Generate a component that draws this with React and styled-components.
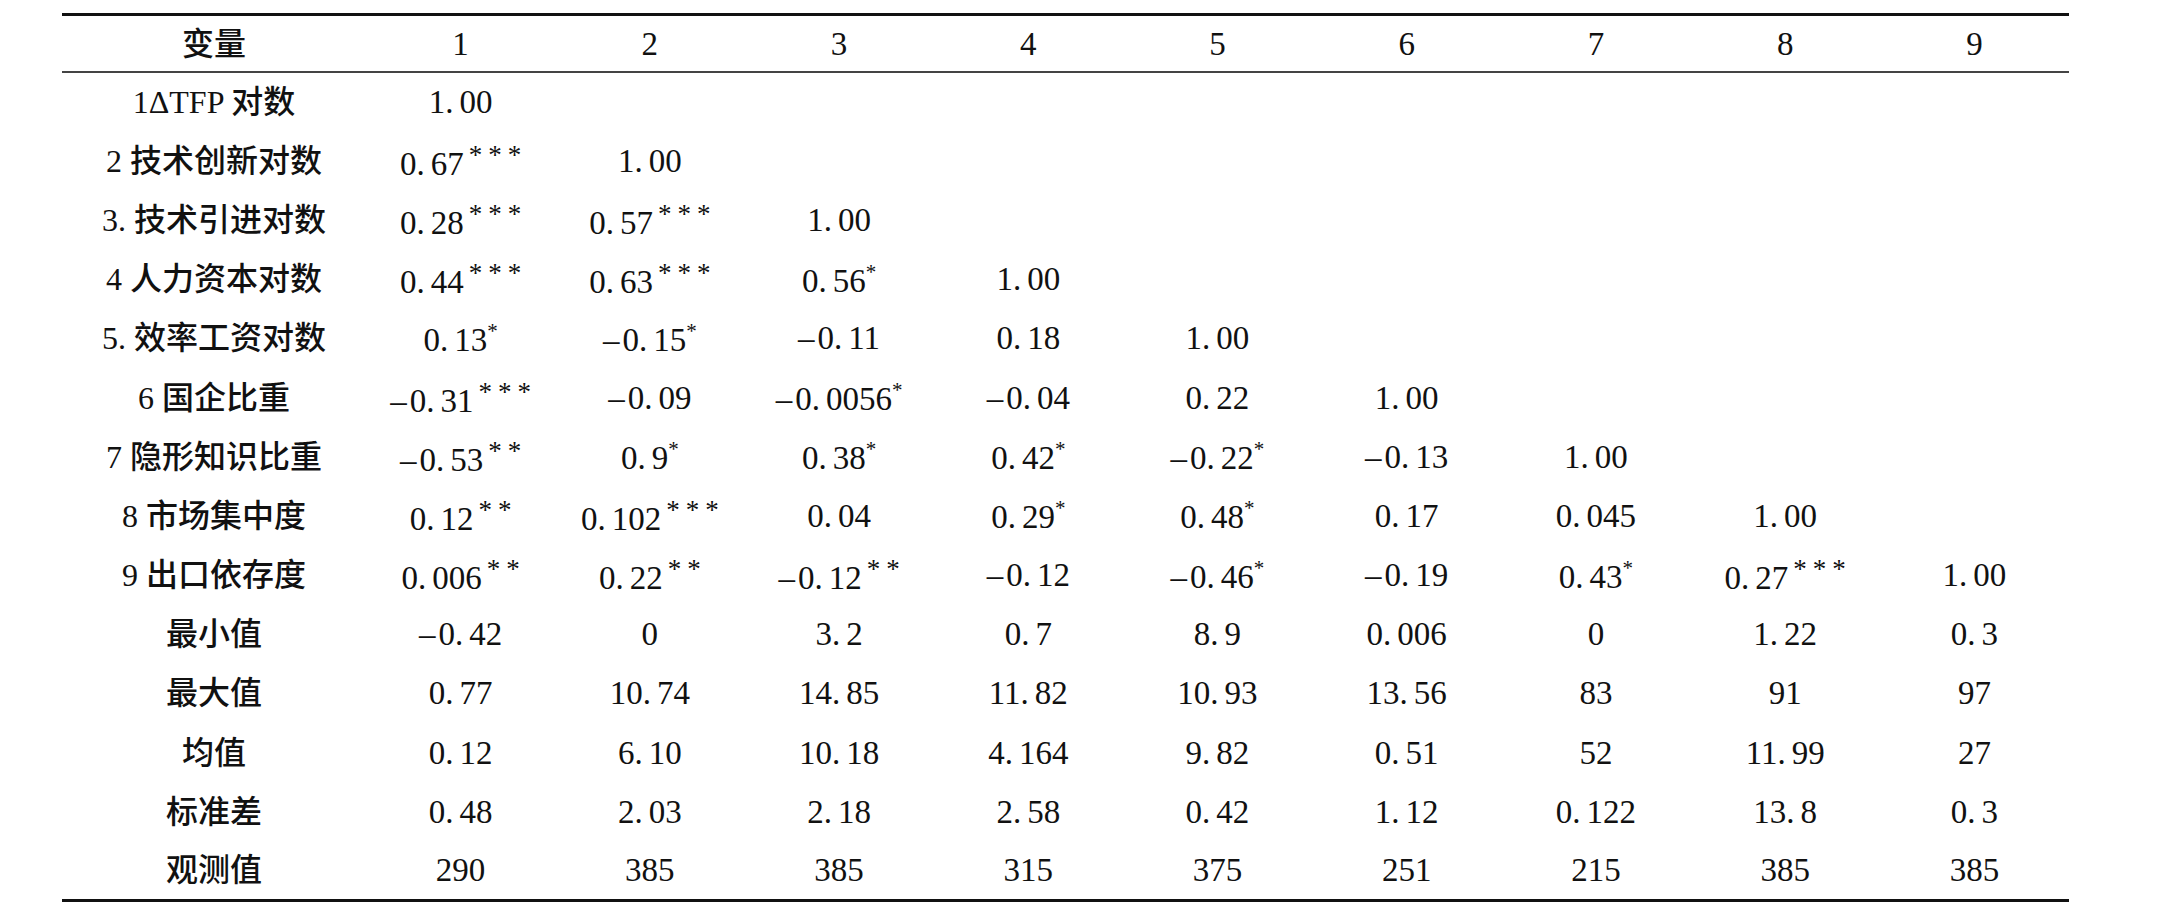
import React from "react";
import styled, { createGlobalStyle } from "styled-components";

const Global = createGlobalStyle`
  html, body { margin: 0; padding: 0; background: #ffffff; }
  body { font-family: "Liberation Serif", "Noto Sans CJK SC", serif; color: #111; }
`;

const Page = styled.div`
  padding: 13px 0 0 62px;
`;

const Table = styled.table`
  width: 2007px;
  border-collapse: collapse;
  table-layout: fixed;
  border-top: 3px solid #111;
  border-bottom: 3px solid #111;
`;

const HeadRow = styled.tr`
  height: 57px;
  border-bottom: 2px solid #444;
`;

const Row = styled.tr`
  height: 59.2px;
`;

const Cell = styled.td`
  padding: 0;
  padding-top: 2px;
  text-align: center;
  vertical-align: middle;
  font-family: "Liberation Serif", "Noto Sans CJK SC", serif;
  font-size: 33px;
  font-weight: ${(p) => (p.$label ? 500 : 400)};
  line-height: 1;
  white-space: nowrap;
  color: #111;
`;

const LabelText = styled.span`
  font-size: 32px;
`;

const HeadCell = styled(Cell).attrs({ as: "th" })`
  font-weight: ${(p) => (p.$label ? 500 : 400)};
`;

const Dot = styled.span`
  margin-right: 6px;
`;

const Stars = styled.span`
  display: inline-block;
  line-height: 1;
  font-size: ${(p) => (p.$single ? "21px" : "27px")};
  vertical-align: ${(p) => (p.$single ? "13px" : "11px")};
  margin-left: ${(p) => (p.$single ? "0px" : "5px")};
  letter-spacing: ${(p) => (p.$single ? "0px" : "6px")};
  margin-right: ${(p) => (p.$single ? "0px" : "-6px")};
`;

const Minus = styled.span`
  margin-right: 3px;
`;

function Num({ v }) {
  const m = v.match(/^(-?)([0-9.]+)(\**)$/);
  const neg = m[1] === "-";
  const num = m[2];
  const stars = m[3];
  const parts = num.split(".");
  return (
    <>
      {neg && <Minus>–</Minus>}
      {parts[0]}
      {parts.length > 1 && (
        <>
          <Dot>.</Dot>
          {parts[1]}
        </>
      )}
      {stars && <Stars $single={stars.length === 1}>{stars}</Stars>}
    </>
  );
}

const rows = [
  ["1ΔTFP 对数", ["1.00"]],
  ["2 技术创新对数", ["0.67***", "1.00"]],
  ["3. 技术引进对数", ["0.28***", "0.57***", "1.00"]],
  ["4 人力资本对数", ["0.44***", "0.63***", "0.56*", "1.00"]],
  ["5. 效率工资对数", ["0.13*", "-0.15*", "-0.11", "0.18", "1.00"]],
  ["6 国企比重", ["-0.31***", "-0.09", "-0.0056*", "-0.04", "0.22", "1.00"]],
  ["7 隐形知识比重", ["-0.53**", "0.9*", "0.38*", "0.42*", "-0.22*", "-0.13", "1.00"]],
  ["8 市场集中度", ["0.12**", "0.102***", "0.04", "0.29*", "0.48*", "0.17", "0.045", "1.00"]],
  ["9 出口依存度", ["0.006**", "0.22**", "-0.12**", "-0.12", "-0.46*", "-0.19", "0.43*", "0.27***", "1.00"]],
  ["最小值", ["-0.42", "0", "3.2", "0.7", "8.9", "0.006", "0", "1.22", "0.3"]],
  ["最大值", ["0.77", "10.74", "14.85", "11.82", "10.93", "13.56", "83", "91", "97"]],
  ["均值", ["0.12", "6.10", "10.18", "4.164", "9.82", "0.51", "52", "11.99", "27"]],
  ["标准差", ["0.48", "2.03", "2.18", "2.58", "0.42", "1.12", "0.122", "13.8", "0.3"]],
  ["观测值", ["290", "385", "385", "315", "375", "251", "215", "385", "385"]],
];

const cols = [1, 2, 3, 4, 5, 6, 7, 8, 9];

export default function App() {
  return (
    <>
      <Global />
      <Page>
        <Table>
          <colgroup>
            <col style={{ width: "304px" }} />
            {cols.map((c) => (
              <col key={c} />
            ))}
          </colgroup>
          <thead>
            <HeadRow>
              <HeadCell $label>
                <LabelText>变量</LabelText>
              </HeadCell>
              {cols.map((c) => (
                <HeadCell key={c}>{c}</HeadCell>
              ))}
            </HeadRow>
          </thead>
          <tbody>
            {rows.map(([label, vals]) => (
              <Row key={label}>
                <Cell $label>
                  <LabelText>{label}</LabelText>
                </Cell>
                {cols.map((c, i) => (
                  <Cell key={c}>{vals[i] !== undefined ? <Num v={vals[i]} /> : null}</Cell>
                ))}
              </Row>
            ))}
          </tbody>
        </Table>
      </Page>
    </>
  );
}
